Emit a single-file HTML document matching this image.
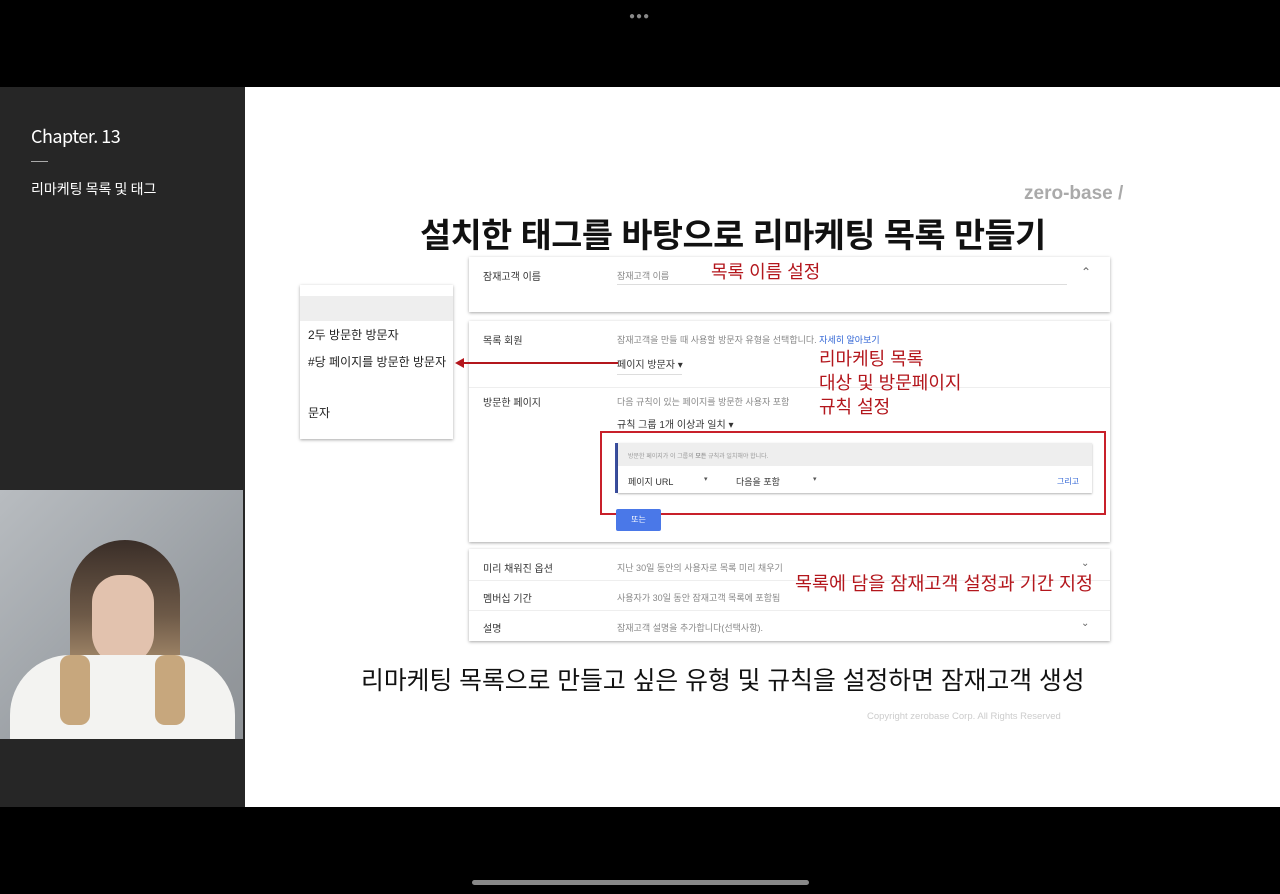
<!DOCTYPE html>
<html><head><meta charset="utf-8"><style>
*{margin:0;padding:0;box-sizing:border-box}
body{width:1280px;height:894px;background:#000;position:relative;overflow:hidden;font-family:"Liberation Sans","Noto Sans CJK KR",sans-serif}
.a{position:absolute;white-space:nowrap}
.side{left:0;top:87px;width:245px;height:720px;background:#262626}
.slide{left:245px;top:87px;width:1035px;height:720px;background:#fff}
.card{background:#fff;box-shadow:0 1px 3px rgba(0,0,0,.35)}
.lbl{font-size:10px;color:#333}
.g{font-size:9px;color:#888}
.red{color:#b3161c}
</style></head><body>
<div class="a" style="left:629px;top:11px;color:#888;font-size:10px;letter-spacing:1px">●●●</div>
<div class="a side"></div>
<div class="a" style="left:31px;top:123px;color:#fff;font-size:18px;letter-spacing:-0.5px;font-family:'Noto Sans CJK KR',sans-serif">Chapter. 13</div>
<div class="a" style="left:31px;top:161px;width:17px;height:1px;background:#aaa"></div>
<div class="a" style="left:31px;top:179px;color:#fff;font-size:14px;font-family:'Noto Sans CJK KR',sans-serif">리마케팅 목록 및 태그</div>
<!-- webcam -->
<div class="a" style="left:0;top:490px;width:243px;height:249px;background:linear-gradient(135deg,#b8bcc0,#9a9fa4 60%,#8e9296);overflow:hidden">
 <div class="a" style="left:70px;top:50px;width:110px;height:190px;border-radius:55px 55px 20px 20px;background:linear-gradient(#3a2e28 0%,#6e5a48 40%,#c3a57e 80%)"></div>
 <div class="a" style="left:92px;top:85px;width:62px;height:90px;border-radius:30px 30px 34px 34px;background:#e2c2ae"></div>
 <div class="a" style="left:10px;top:165px;width:225px;height:110px;border-radius:60px 60px 0 0;background:#f3f3f1"></div>
 <div class="a" style="left:60px;top:165px;width:30px;height:70px;border-radius:10px;background:#c7a77d"></div>
 <div class="a" style="left:155px;top:165px;width:30px;height:70px;border-radius:10px;background:#c7a77d"></div>
</div>
<div class="a slide"></div>
<div class="a" style="left:1024px;top:183px;font-size:19px;font-weight:bold;color:#aaa">zero-base /</div>
<div class="a" style="left:420px;top:208px;font-size:33.8px;font-weight:bold;color:#111;letter-spacing:-0.5px">설치한 태그를 바탕으로 리마케팅 목록 만들기</div>
<!-- dropdown left -->
<div class="a card" style="left:300px;top:285px;width:153px;height:154px;overflow:hidden">
 <div class="a" style="left:0;top:11px;width:153px;height:25px;background:#eee"></div>
 <div class="a" style="left:8px;top:41px;font-size:12px;color:#222">2두 방문한 방문자</div>
 <div class="a" style="left:8px;top:68px;font-size:12px;color:#222">#당 페이지를 방문한 방문자</div>
 <div class="a" style="left:8px;top:119px;font-size:12px;color:#222">문자</div>
</div>
<!-- card 1 -->
<div class="a card" style="left:469px;top:257px;width:641px;height:55px">
 <div class="a lbl" style="left:14px;top:11px">잠재고객 이름</div>
 <div class="a g" style="left:148px;top:12px">잠재고객 이름</div>
 <div class="a" style="left:148px;top:27px;width:450px;height:1px;background:#ddd"></div>
 <div class="a" style="left:612px;top:8px;font-size:12px;color:#666">⌃</div>
 <div class="a red" style="left:242px;top:1px;font-size:18px">목록 이름 설정</div>
</div>
<!-- card 2 -->
<div class="a card" style="left:469px;top:321px;width:641px;height:221px">
 <div class="a lbl" style="left:14px;top:11px">목록 회원</div>
 <div class="a g" style="left:148px;top:12px">잠재고객을 만들 때 사용할 방문자 유형을 선택합니다. <span style="color:#3367d6">자세히 알아보기</span></div>
 <div class="a lbl" style="left:148px;top:35px">페이지 방문자 ▾</div>
 <div class="a" style="left:148px;top:53px;width:65px;height:1px;background:#ddd"></div>
 <div class="a" style="left:0;top:66px;width:641px;height:1px;background:#eee"></div>
 <div class="a lbl" style="left:14px;top:73px">방문한 페이지</div>
 <div class="a g" style="left:148px;top:74px">다음 규칙이 있는 페이지를 방문한 사용자 포함</div>
 <div class="a lbl" style="left:148px;top:95px">규칙 그룹 1개 이상과 일치 ▾</div>
 <div class="a" style="left:146px;top:122px;width:3px;height:50px;background:#3b4fa0"></div>
 <div class="a card" style="left:149px;top:122px;width:474px;height:50px;box-shadow:0 1px 2px rgba(0,0,0,.3)">
  <div class="a" style="left:0;top:0;width:474px;height:23px;background:#eee"></div>
  <div class="a" style="left:10px;top:8px;font-size:6px;color:#999">방문한 페이지가 이 그룹의 <b>모든</b> 규칙과 일치해야 합니다.</div>
  <div class="a" style="left:10px;top:32px;font-size:9px;color:#333">페이지 URL</div>
  <div class="a" style="left:86px;top:32px;font-size:7px;color:#555">▾</div>
  <div class="a" style="left:118px;top:32px;font-size:9px;color:#333">다음을 포함</div>
  <div class="a" style="left:195px;top:32px;font-size:7px;color:#555">▾</div>
  <div class="a" style="left:439px;top:33px;font-size:8px;color:#3367d6">그리고</div>
 </div>
 <div class="a" style="left:131px;top:110px;width:506px;height:84px;border:2px solid #c8202a"></div>
 <div class="a" style="left:147px;top:188px;width:45px;height:22px;background:#4a78e8;border-radius:2px;color:#fff;font-size:8px;text-align:center;line-height:22px">또는</div>
 <div class="a red" style="left:350px;top:26px;font-size:18px;line-height:24px;white-space:normal;width:190px">리마케팅 목록<br>대상 및 방문페이지<br>규칙 설정</div>
</div>
<!-- arrow (above cards) -->
<div class="a" style="left:462px;top:362px;width:156px;height:2px;background:#b3161c;z-index:5"></div>
<div class="a" style="left:455px;top:358px;width:0;height:0;border-top:5px solid transparent;border-bottom:5px solid transparent;border-right:9px solid #b3161c;z-index:5"></div>
<!-- card 3 -->
<div class="a card" style="left:469px;top:549px;width:641px;height:92px">
 <div class="a lbl" style="left:14px;top:11px">미리 채워진 옵션</div>
 <div class="a g" style="left:148px;top:12px">지난 30일 동안의 사용자로 목록 미리 채우기</div>
 <div class="a" style="left:0;top:31px;width:641px;height:1px;background:#eee"></div>
 <div class="a lbl" style="left:14px;top:41px">멤버십 기간</div>
 <div class="a g" style="left:148px;top:42px">사용자가 30일 동안 잠재고객 목록에 포함됨</div>
 <div class="a" style="left:0;top:61px;width:641px;height:1px;background:#eee"></div>
 <div class="a lbl" style="left:14px;top:71px">설명</div>
 <div class="a g" style="left:148px;top:72px">잠재고객 설명을 추가합니다(선택사항).</div>
 <div class="a" style="left:612px;top:9px;font-size:10px;color:#666">⌄</div>
 <div class="a" style="left:612px;top:69px;font-size:10px;color:#666">⌄</div>
 <div class="a red" style="left:326px;top:21px;font-size:18.5px">목록에 담을 잠재고객 설정과 기간 지정</div>
</div>
<div class="a" style="left:361px;top:661px;font-size:24.8px;color:#111">리마케팅 목록으로 만들고 싶은 유형 및 규칙을 설정하면 잠재고객 생성</div>
<div class="a" style="left:867px;top:711px;font-size:9.5px;color:#ccc">Copyright zerobase Corp. All Rights Reserved</div>
<div class="a" style="left:472px;top:880px;width:337px;height:5px;border-radius:3px;background:#888"></div>
</body></html>
